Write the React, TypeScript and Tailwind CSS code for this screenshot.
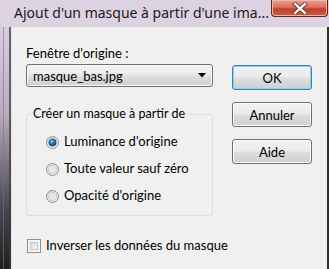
import React from "react";

function Radio({ checked }: { checked?: boolean }) {
  return (
    <svg width="13" height="13" viewBox="0 0 13 13" className="shrink-0">
      <defs>
        <linearGradient id="rOut" x1="0" y1="0" x2="1" y2="1">
          <stop offset="0" stopColor="#dcdcdc" />
          <stop offset="1" stopColor="#f8f8f8" />
        </linearGradient>
        <radialGradient id="rDot" cx="0.4" cy="0.35" r="0.7">
          <stop offset="0" stopColor="#8fd3ff" />
          <stop offset="0.5" stopColor="#1f6fb0" />
          <stop offset="1" stopColor="#0c3c6c" />
        </radialGradient>
      </defs>
      <circle cx="6.5" cy="6.5" r="6" fill="url(#rOut)" stroke="#8e8f8f" />
      <circle cx="6.5" cy="6.5" r="4.2" fill="#e6e6e6" stroke="#c4c4c4" strokeWidth="0.8" />
      {checked && <circle cx="6.5" cy="6.5" r="3.6" fill="url(#rDot)" stroke="#123f66" strokeWidth="0.6" />}
    </svg>
  );
}

function WinButton({ label, isDefault }: { label: string; isDefault?: boolean }) {
  return (
    <div
      className={
        "h-[25px] w-[80px] rounded-[3px] border flex items-center justify-center bg-[linear-gradient(#f2f2f2_0%,#ebebeb_45%,#dddddd_55%,#cfcfcf_100%)] " +
        (isDefault
          ? "border-[#3c7fb1] shadow-[inset_0_0_0_1px_#8ad3f5]"
          : "border-[#707070] shadow-[inset_0_0_0_1px_#fcfcfc]")
      }
    >
      <span className="leading-[16px]">{label}</span>
    </div>
  );
}

export default function App() {
  return (
    <div className="w-[329px] h-[269px] overflow-hidden flex flex-col bg-[#ddd2e2] font-['Lato','Noto_Sans',sans-serif] text-[13px] text-black">
      {/* title bar */}
      <div className="h-[27px] flex items-start justify-between pl-[14px] shrink-0">
        <span className="font-['Noto_Sans',sans-serif] text-[14px] leading-[18px] mt-[4px] text-[#1a1a1a]">
          Ajout d'un masque à partir d'une ima...
        </span>
        <div className="w-[57px] h-[17px] mr-[1px] rounded-b-[4px] border border-t-0 border-[#6b2318] bg-[linear-gradient(#e8a497_0%,#d8705f_45%,#c2402b_55%,#d25c3f_100%)] flex items-center justify-center shadow-[inset_0_0_0_1px_#f0b5a8]">
          <svg width="16" height="13" viewBox="0 0 16 13">
            <path d="M3 2 L13 11 M13 2 L3 11" stroke="#5a1d14" strokeWidth="4" strokeLinecap="square" />
            <path d="M3 2 L13 11 M13 2 L3 11" stroke="#ffffff" strokeWidth="2.4" strokeLinecap="square" />
          </svg>
        </div>
      </div>

      <div className="flex flex-1">
        {/* left frame */}
        <div className="w-[12px] flex bg-[linear-gradient(#d8cde0_0%,#b9aebf_35%,#4a4650_75%,#1e1e1e_100%)]">
          <div className="w-[3px]" />
          <div className="w-[1px] bg-[#7a7280]/60" />
          <div className="flex-1" />
          <div className="w-[2px] bg-[#3a3a3a]/70" />
          <div className="w-[1px] bg-[#e4e4e4]" />
        </div>

        {/* client area */}
        <div className="w-[315px] bg-[#f0f0f0] flex flex-col pl-[14px]">
          <div className="flex">
            <div className="w-[187px] flex flex-col pt-[18px]">
              <span className="leading-[16px]">Fenêtre d'origine :</span>
              <div className="mt-[3px] h-[23px] rounded-[3px] border border-[#707070] bg-[linear-gradient(#f2f2f2_0%,#ebebeb_45%,#dddddd_55%,#cfcfcf_100%)] shadow-[inset_0_0_0_1px_#fafafa] flex items-center justify-between pl-[6px] pr-[6px]">
                <span className="leading-[16px]">masque_bas.jpg</span>
                <svg width="8" height="5" viewBox="0 0 8 5">
                  <path d="M0 0 H8 L4 4.5 Z" fill="#000" />
                </svg>
              </div>

              <fieldset className="mt-[19px] border border-[#d5dfe5] rounded-[3px] pb-[11px]">
                <legend className="ml-[4px] px-[2px] leading-[16px] text-[12.5px] whitespace-nowrap">
                  Créer un masque à partir de
                </legend>
                <div className="flex flex-col gap-[11px] mt-[12px] pl-[19px]">
                  <div className="flex items-center gap-[5px] h-[16px]">
                    <Radio checked />
                    <span>Luminance d'origine</span>
                  </div>
                  <div className="flex items-center gap-[5px] h-[16px]">
                    <Radio />
                    <span>Toute valeur sauf zéro</span>
                  </div>
                  <div className="flex items-center gap-[5px] h-[16px]">
                    <Radio />
                    <span>Opacité d'origine</span>
                  </div>
                </div>
              </fieldset>
            </div>

            <div className="ml-[19px] flex flex-col pt-[38px] gap-[12px]">
              <WinButton label="OK" isDefault />
              <WinButton label="Annuler" />
              <WinButton label="Aide" />
            </div>
          </div>

          <div className="mt-[22px] flex items-center gap-[5px] h-[16px] pl-[1px]">
            <div className="w-[14px] h-[14px] border border-[#8e8f8f] bg-[#f4f4f4] p-[2px]">
              <div className="w-full h-full border border-[#c8c8c8] bg-[linear-gradient(135deg,#d8d8d8,#f8f8f8)]" />
            </div>
            <span className="whitespace-nowrap">Inverser les données du masque</span>
          </div>
        </div>

        {/* right frame */}
        <div className="w-[2px] bg-[#2e2e2e]" />
      </div>
    </div>
  );
}
